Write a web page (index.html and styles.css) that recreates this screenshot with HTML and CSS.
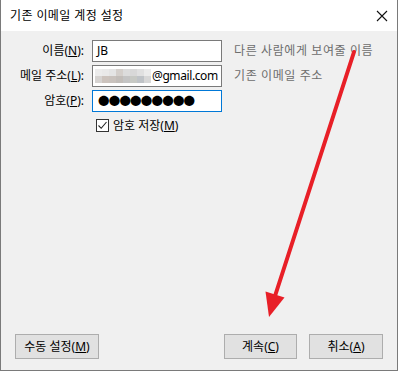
FILE: index.html
```html
<!DOCTYPE html>
<html lang="ko">
<head>
    <meta charset="UTF-8">
    <title>기존 이메일 계정 설정</title>
    <link rel="stylesheet" href="styles.css">
</head>
<body>
    <div class="window">
        <div class="titlebar">
            <span class="title">기존 이메일 계정 설정</span>
            <svg class="close" width="12" height="12" viewBox="0 0 12 12">
                <path d="M1 1 L11 11 M11 1 L1 11" stroke="#111" stroke-width="1.1" fill="none"/>
            </svg>
        </div>

        <div class="content">
            <div class="fields">
                <span class="field-label">이름(<u>N</u>):</span>
                <div class="input">JB</div>
                <span class="hint">다른 사람에게 보여줄 이름</span>

                <span class="field-label">메일 주소(<u>L</u>):</span>
                <div class="input email">
                    <span class="mosaic">
                        <i></i><i></i><i></i><i></i><i></i><i></i><i></i><i></i>
                        <i></i><i></i><i></i><i></i><i></i><i></i><i></i><i></i>
                    </span>@gmail.com
                </div>
                <span class="hint">기존 이메일 주소</span>

                <span class="field-label">암호(<u>P</u>):</span>
                <div class="input focused"><span class="dots">●●●●●●●●●</span></div>
                <span></span>
            </div>

            <div class="remember">
                <span class="checkbox">
                    <svg width="11" height="11" viewBox="0 0 11 11">
                        <path d="M1.5 5.5 L4.2 8.3 L9.5 2" stroke="#222" stroke-width="1.1" fill="none"/>
                    </svg>
                </span>
                <span>암호 저장(<u>M</u>)</span>
            </div>

            <div class="buttons">
                <button class="btn manual">수동 설정(<u>M</u>)</button>
                <button class="btn next">계속(<u>C</u>)</button>
                <button class="btn cancel">취소(<u>A</u>)</button>
            </div>
        </div>

        <svg class="arrow" width="398" height="371" viewBox="0 0 398 371">
            <line x1="353" y1="52" x2="274" y2="296" stroke="#e81f27" stroke-width="4" stroke-linecap="round"/>
            <polygon points="264.5,291.5 283.5,297.5 268,317" fill="#e81f27"/>
        </svg>
    </div>
</body>
</html>
```

FILE: styles.css
```css
* {
    box-sizing: border-box;
}

body {
    margin: 0;
    font-family: "Noto Sans", "Noto Sans CJK KR", sans-serif;
    font-size: 12px;
    color: #000;
    background: #fff;
}

.window {
    position: relative;
    width: 398px;
    height: 371px;
    border: 1px solid #7a7a7a;
    border-top: none;
    display: flex;
    flex-direction: column;
    overflow: hidden;
}

.titlebar {
    height: 31px;
    background: #fff;
    display: flex;
    align-items: center;
    justify-content: space-between;
    padding: 0 9px 0 9px;
    flex-shrink: 0;
}

.title {
    font-size: 12px;
    line-height: 16px;
    letter-spacing: 0.4px;
}

.content {
    flex: 1;
    background: #f0f0f0;
    display: flex;
    flex-direction: column;
    padding: 9px 14px 11px 8px;
}

.fields {
    display: grid;
    grid-template-columns: 75px 130px auto;
    grid-auto-rows: 22px;
    column-gap: 8px;
    row-gap: 3px;
    align-items: center;
}

.field-label {
    text-align: right;
    line-height: 16px;
    white-space: nowrap;
}

.input {
    height: 22px;
    background: #fff;
    border: 1px solid #7a7a7a;
    padding: 0 0 0 4px;
    display: flex;
    align-items: center;
    line-height: 16px;
    white-space: nowrap;
    overflow: hidden;
}

.input.email {
    padding-left: 2px;
    letter-spacing: -0.4px;
}

.input.focused {
    border-color: #0078d7;
}

.dots {
    font-size: 11.5px;
    letter-spacing: -0.8px;
    line-height: 16px;
    margin-left: 1px;
}

.mosaic {
    display: inline-grid;
    grid-template-columns: repeat(8, 7px);
    grid-template-rows: 7px 7px;
    margin-right: 1px;
}

.mosaic i:nth-child(1)  { background: #ececec; }
.mosaic i:nth-child(2)  { background: #e9e9e9; }
.mosaic i:nth-child(3)  { background: #e4e4e4; }
.mosaic i:nth-child(4)  { background: #d4cfcb; }
.mosaic i:nth-child(5)  { background: #dcdcdc; }
.mosaic i:nth-child(6)  { background: #d8d8d8; }
.mosaic i:nth-child(7)  { background: #e0e0e0; }
.mosaic i:nth-child(8)  { background: #ebebeb; }
.mosaic i:nth-child(9)  { background: #d6d3d1; }
.mosaic i:nth-child(10) { background: #ccc3bd; }
.mosaic i:nth-child(11) { background: #c9c2bd; }
.mosaic i:nth-child(12) { background: #c2bdb9; }
.mosaic i:nth-child(13) { background: #c4c4c4; }
.mosaic i:nth-child(14) { background: #c7c9c4; }
.mosaic i:nth-child(15) { background: #bfc3c7; }
.mosaic i:nth-child(16) { background: #d7d7d7; }

.hint {
    color: #6d6d6d;
    margin-left: 4px;
    white-space: nowrap;
    line-height: 16px;
    letter-spacing: 0.6px;
}

.remember {
    display: flex;
    align-items: center;
    gap: 4px;
    margin: 5px 0 0 87px;
    height: 16px;
}

.checkbox {
    width: 13px;
    height: 13px;
    border: 1px solid #333;
    background: #fff;
    display: flex;
    align-items: center;
    justify-content: center;
}

.buttons {
    margin-top: auto;
    margin-left: 6px;
    display: flex;
    gap: 12px;
}

.btn {
    height: 25px;
    background: #e1e1e1;
    border: 1px solid #adadad;
    font-family: inherit;
    font-size: 12px;
    color: #000;
    padding: 0;
    line-height: 16px;
}

.manual {
    width: 84px;
}

.next {
    width: 73px;
    margin-left: auto;
}

.cancel {
    width: 74px;
}

.arrow {
    position: absolute;
    top: 0;
    left: 0;
    pointer-events: none;
}
```
